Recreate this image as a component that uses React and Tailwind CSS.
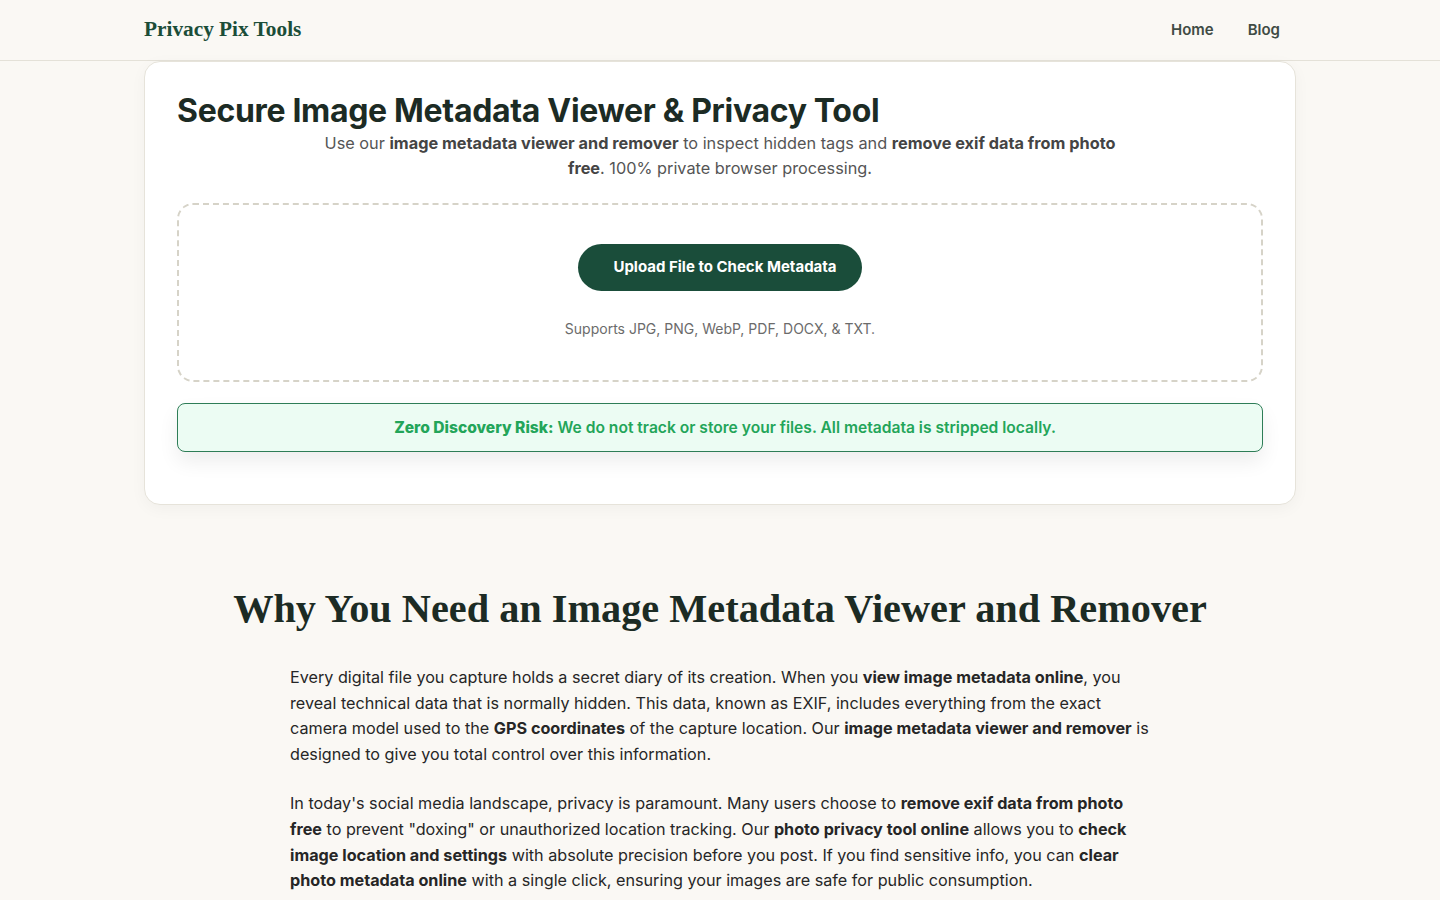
import React from "react";

const Header = () => (
  <header className="h-[61px] border-b border-[#e4e1d8] bg-[#faf8f4]">
    <div className="mx-auto flex h-full max-w-[1152px] items-center justify-between">
      <a className="font-['Liberation_Serif',serif] text-[21.3px] font-bold text-[#1b4d38]">
        Privacy Pix Tools
      </a>
      <nav className="flex items-center gap-[2px] text-[15px] font-semibold text-[#3f4b44]">
        <a className="px-4 py-2">Home</a>
        <a className="px-4 py-2">Blog</a>
      </nav>
    </div>
  </header>
);

const Tool = () => (
  <section className="mx-auto w-[1152px] rounded-2xl border border-[#e6e3da] bg-white px-8 pb-[52px] pt-[29px] shadow-[0_4px_16px_rgba(0,0,0,0.04)]">
    <h1 className="text-[32px] font-bold leading-[40px] tracking-[-0.01em] text-[#1c2b24]">
      Secure Image Metadata Viewer &amp; Privacy Tool
    </h1>
    <p className="mx-auto max-w-[800px] text-center text-[16.3px] leading-[25px] text-[#555]">
      Use our <strong className="font-bold text-[#444]">image metadata viewer and remover</strong> to inspect hidden tags and{" "}
      <strong className="font-bold text-[#444]">remove exif data from photo free</strong>. 100% private browser processing.
    </p>

    <div className="mt-[22px] flex flex-col items-center rounded-2xl border-2 border-dashed border-[#d6d3c8] px-10 pb-[41px] pt-[39px]">
      <button className="h-[47px] rounded-full bg-[#1a4d3a] pl-[35px] pr-[25px] text-[15px] font-bold text-white">
        Upload File to Check Metadata
      </button>
      <p className="mt-[28px] text-sm leading-5 text-[#6b6b6b]">Supports JPG, PNG, WebP, PDF, DOCX, &amp; TXT.</p>
    </div>

    <div className="mt-[21px] flex h-[49px] items-center justify-center rounded-lg border border-[#2e7d57] bg-[#ecfcf3] pl-[10px] text-[15.6px] font-semibold text-[#23a559] shadow-[0_10px_20px_rgba(0,0,0,0.07)]">
      <span>
        <strong className="font-extrabold">Zero Discovery Risk:</strong> We do not track or store your files. All metadata is stripped locally.
      </span>
    </div>
  </section>
);

const Why = () => (
  <section className="px-6 pt-[80px]">
    <h2 className="text-center font-['Liberation_Serif',serif] text-[40.3px] font-bold leading-[48px] text-[#1c2b24]">
      Why You Need an Image Metadata Viewer and Remover
    </h2>
    <div className="mx-auto mt-[32px] max-w-[860px] text-[16.2px] leading-[25.6px] text-[#262626]">
      <p className="mb-6">
        Every digital file you capture holds a secret diary of its creation. When you{" "}
        <strong className="font-bold">view image metadata online</strong>, you reveal technical data that is normally hidden. This data,
        known as EXIF, includes everything from the exact camera model used to the{" "}
        <strong className="font-bold">GPS coordinates</strong> of the capture location. Our{" "}
        <strong className="font-bold">image metadata viewer and remover</strong> is designed to give you total control over this
        information.
      </p>
      <p className="mb-6">
        In today's social media landscape, privacy is paramount. Many users choose to{" "}
        <strong className="font-bold">remove exif data from photo free</strong> to prevent "doxing" or unauthorized location tracking. Our{" "}
        <strong className="font-bold">photo privacy tool online</strong> allows you to{" "}
        <strong className="font-bold">check image location and settings</strong> with absolute precision before you post. If you find
        sensitive info, you can <strong className="font-bold">clear photo metadata online</strong> with a single click, ensuring your
        images are safe for public consumption.
      </p>
    </div>
  </section>
);

export default function App() {
  return (
    <div className="min-h-screen bg-[#faf8f4] font-['Inter','Liberation_Sans',sans-serif]">
      <Header />
      <main>
        <Tool />
        <Why />
      </main>
    </div>
  );
}
